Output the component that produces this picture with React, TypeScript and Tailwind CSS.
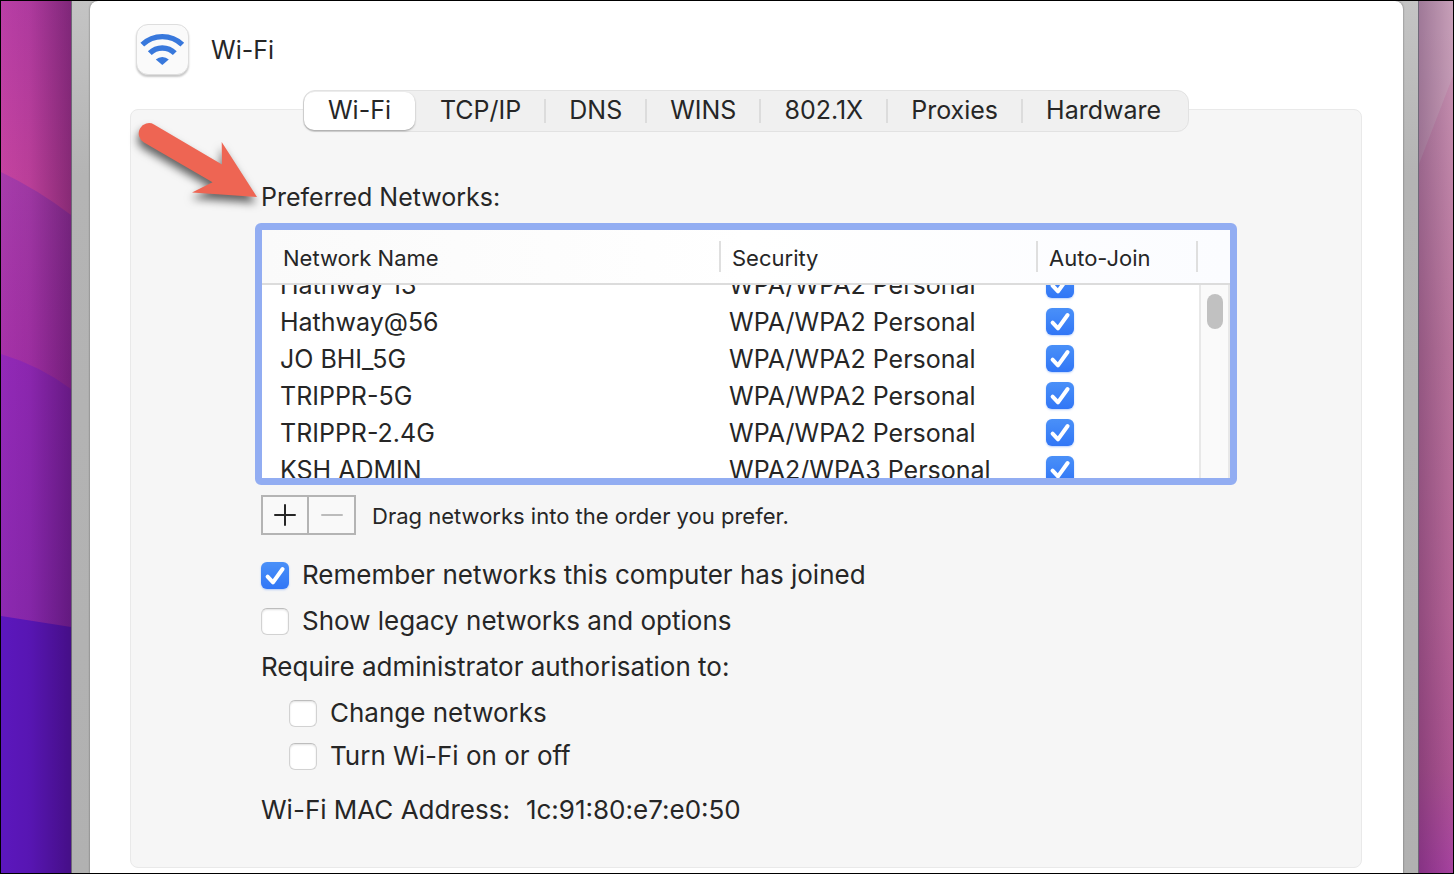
import { useState } from "react";

const tabs = ["Wi-Fi", "TCP/IP", "DNS", "WINS", "802.1X", "Proxies", "Hardware"];

const initialNetworks = [
  { name: "Hathway 13", security: "WPA/WPA2 Personal", autoJoin: true },
  { name: "Hathway@56", security: "WPA/WPA2 Personal", autoJoin: true },
  { name: "JO BHI_5G", security: "WPA/WPA2 Personal", autoJoin: true },
  { name: "TRIPPR-5G", security: "WPA/WPA2 Personal", autoJoin: true },
  { name: "TRIPPR-2.4G", security: "WPA/WPA2 Personal", autoJoin: true },
  { name: "KSH ADMIN", security: "WPA2/WPA3 Personal", autoJoin: true },
];

const Checkbox = ({
  id,
  label,
  defaultChecked = false,
}: {
  id: string;
  label?: string;
  defaultChecked?: boolean;
}) => {
  return (
    <span className="grid shrink-0">
      <input
        id={id}
        type="checkbox"
        aria-label={label}
        defaultChecked={defaultChecked}
        className="peer col-start-1 row-start-1 w-7 h-[27px] appearance-none rounded-md border border-[#d2d2d2] border-t-[#bdbdbd] bg-white shadow-[inset_0_1px_2px_rgba(0,0,0,0.12)] checked:border-0 checked:bg-linear-to-b checked:from-[#4a90f8] checked:to-[#3176f6] checked:shadow-[0_1px_2px_rgba(49,118,246,0.35)]"
      />
      <svg
        viewBox="0 0 28 27"
        className="col-start-1 row-start-1 w-7 h-[27px] pointer-events-none invisible peer-checked:visible"
        fill="none"
        stroke="white"
        strokeWidth="4"
        strokeLinecap="round"
        strokeLinejoin="round"
      >
        <path d="M6.6 14.6 L12 20.3 L21.6 7" />
      </svg>
    </span>
  );
};

const Option = ({
  id,
  text,
  defaultChecked,
}: {
  id: string;
  text: string;
  defaultChecked?: boolean;
}) => (
  <div className="flex items-center gap-[13px] h-8">
    <Checkbox id={id} defaultChecked={defaultChecked} />
    <label htmlFor={id}>{text}</label>
  </div>
);

const WifiIcon = () => (
  <span className="flex w-[53px] h-[51px] rounded-xl border border-[#dedede] bg-[#fafafa] shadow-[0_2px_2px_rgba(0,0,0,0.22)]">
    <svg viewBox="137 25 51 49" className="w-full h-full" fill="none" stroke="#3878dc" strokeWidth="5.4">
      <path d="M142.3 44.6 A29 29 0 0 1 182.3 44.6" />
      <path d="M149.8 53.2 A17.5 17.5 0 0 1 174.8 53.2" />
      <path d="M155.8 59.6 A9.6 9.6 0 0 1 168.8 59.6 L162.3 65 Z" fill="#3878dc" stroke="none" />
    </svg>
  </span>
);

const PointerArrow = () => (
  <svg
    viewBox="0 0 140 110"
    className="absolute left-0 top-0 w-[140px] h-[110px] pointer-events-none drop-shadow-[-1px_6px_4px_rgba(0,0,0,0.6)]"
  >
    <path
      d="M23 14.4 L91 54.4 L90.7 32 L126 87 L61 82.6 L81.5 72.3 L13 32.4 A10 10 0 0 1 23 14.4 Z"
      fill="#ee6553"
    />
  </svg>
);

const WallpaperLeft = () => (
  <svg viewBox="0 0 71 872" preserveAspectRatio="none" className="w-[70px] self-stretch shrink-0">
    <defs>
      <linearGradient id="pink" x1="0" y1="0" x2="0" y2="1">
        <stop offset="0" stopColor="#b93ea6" />
        <stop offset="1" stopColor="#c8449f" />
      </linearGradient>
      <linearGradient id="orchid" x1="0" y1="0" x2="0" y2="1">
        <stop offset="0" stopColor="#a73cab" />
        <stop offset="1" stopColor="#a62fa8" />
      </linearGradient>
      <linearGradient id="violet" x1="0" y1="0" x2="0" y2="1">
        <stop offset="0" stopColor="#9329b8" />
        <stop offset="1" stopColor="#8c29b0" />
      </linearGradient>
      <linearGradient id="shadeLeft" x1="0" y1="0" x2="1" y2="0">
        <stop offset="0" stopColor="#200030" stopOpacity="0" />
        <stop offset="0.4" stopColor="#200030" stopOpacity="0.07" />
        <stop offset="1" stopColor="#200030" stopOpacity="0.38" />
      </linearGradient>
    </defs>
    <path d="M0 0 H71 V220 H0 Z" fill="url(#pink)" />
    <path d="M0 171 Q38 189 71 214 V400 H0 Z" fill="url(#orchid)" />
    <path d="M0 353 Q40 365 71 388 V640 H0 Z" fill="url(#violet)" />
    <path d="M0 615 L71 626 V872 H0 Z" fill="#5c17bd" />
    <path d="M0 0 H71 V872 H0 Z" fill="url(#shadeLeft)" />
  </svg>
);

const WallpaperRight = () => (
  <svg viewBox="0 0 34 872" preserveAspectRatio="none" className="w-[34px] self-stretch shrink-0">
    <defs>
      <linearGradient id="dusk" x1="0" y1="0" x2="0" y2="1">
        <stop offset="0" stopColor="#c795b4" />
        <stop offset="0.4" stopColor="#b9749c" />
        <stop offset="0.7" stopColor="#b56396" />
        <stop offset="0.88" stopColor="#ae5592" />
        <stop offset="1" stopColor="#a6429f" />
      </linearGradient>
      <linearGradient id="shadeRight" x1="0" y1="0" x2="1" y2="0">
        <stop offset="0" stopColor="#200030" stopOpacity="0.24" />
        <stop offset="1" stopColor="#200030" stopOpacity="0" />
      </linearGradient>
    </defs>
    <path d="M0 0 H34 V872 H0 Z" fill="url(#dusk)" />
    <path d="M0 0 H34 V75 L0 163 Z" fill="#c8b4c4" fillOpacity="0.35" />
    <path d="M0 0 H34 V872 H0 Z" fill="url(#shadeRight)" />
  </svg>
);

const NetworksTable = () => (
  <div className="relative rounded-md border-[7px] border-[#92adf2] bg-white">
    <table className="block" aria-labelledby="preferred">
      <thead className="block">
        <tr className="grid grid-cols-[1fr_317px_160px_32px] h-[53px] items-center bg-linear-to-r from-[#fafafa] via-white to-[#fbfcff] text-[22px] text-left">
          <th className="flex items-center h-[31px] pl-[21px] pt-0.5 border-r-2 border-[#dfdfdf] font-normal">Network Name</th>
          <th className="flex items-center h-[31px] pl-[11px] pt-0.5 border-r-2 border-[#dfdfdf] font-normal">Security</th>
          <th className="flex items-center h-[31px] pl-[11px] pt-0.5 border-r-2 border-[#dfdfdf] font-normal">Auto-Join</th>
        </tr>
      </thead>
      <tbody className="block h-[195px] overflow-hidden border-t-2 border-[#dcdcdc]">
        {initialNetworks.map((network) => (
          <tr
            key={network.name}
            className="grid grid-cols-[1fr_317px_160px_32px] items-center h-[37px] first:-mt-[19px]"
          >
            <td className="pl-[18px]">{network.name}</td>
            <td className="pl-2">{network.security}</td>
            <td className="pl-2">
              <Checkbox
                id={network.name}
                label={"Auto-join " + network.name}
                defaultChecked={network.autoJoin}
              />
            </td>
          </tr>
        ))}
      </tbody>
    </table>
    <div className="absolute right-0 top-[55px] bottom-0 w-[31px] border-l-2 border-r-2 border-[#e8e8e8] bg-[#fafafa] pl-1.5 pt-[9px]">
      <div className="w-4 h-[35px] rounded-full bg-[#c1c1c1]" />
    </div>
  </div>
);

const App = () => {
  const [activeTab, setActiveTab] = useState("Wi-Fi");

  return (
    <div className="flex min-h-screen border border-black font-['Inter',sans-serif] text-[25px] leading-8 text-[#262626]">
      <WallpaperLeft />
      <div className="flex flex-1 pl-[18px] pr-[15px] border-x border-[#6f6878] bg-linear-to-b from-[#c4c4c4] via-[#b4b4b4] via-20% to-[#b1b1b1]">
        <main className="flex-1 rounded-t-lg bg-white pl-10 pr-[41px] pt-[23px] pb-[5px] shadow-[0_0_2px_rgba(0,0,0,0.5)]">
          <header className="flex items-center gap-[22px] pl-[6px]">
            <WifiIcon />
            <h1>Wi-Fi</h1>
          </header>

          <section className="relative mt-[34px] rounded-lg border border-[#e9e9e9] bg-[#f6f6f6] px-[124px] pb-[41px]">
            <nav className="flex justify-center -mt-5 -mx-20">
              <div role="tablist" className="flex h-[42px] pr-1 rounded-xl border border-[#e2e2e2] bg-[#f0f0f0]">
                {tabs.map((tab, i) => (
                  <div key={tab} className="flex items-center">
                    {i > 0 && (
                      <span
                        className={
                          activeTab === tab || activeTab === tabs[i - 1]
                            ? "w-0.5 h-6"
                            : "w-0.5 h-6 bg-[#dcdcdc]"
                        }
                      />
                    )}
                    <button
                      role="tab"
                      aria-selected={activeTab === tab}
                      onClick={() => setActiveTab(tab)}
                      className={
                        activeTab === tab
                          ? "h-[38px] px-6 pb-0.5 rounded-[10px] bg-white shadow-[0_1px_2px_rgba(0,0,0,0.35)]"
                          : "h-[38px] px-[23px] pb-0.5"
                      }
                    >
                      {tab}
                    </button>
                  </div>
                ))}
              </div>
            </nav>

            <PointerArrow />

            <h2 id="preferred" className="mt-[49px] mb-[10px] pl-[6px]">
              Preferred Networks:
            </h2>
            <NetworksTable />

            <div className="pl-[6px] text-[26px] leading-8">
              <div className="flex items-center gap-4 mt-[10px]">
                <div className="flex h-10 border-2 border-[#b4b4b4] bg-[#f9f9f9]">
                  <button aria-label="Add network" className="flex items-center justify-center w-[46px] border-r-2 border-[#b4b4b4]">
                    <svg viewBox="0 0 22 22" className="w-[22px] h-[22px]" stroke="#262626" strokeWidth="2" strokeLinecap="round">
                      <path d="M1 11 H21 M11 1 V21" />
                    </svg>
                  </button>
                  <button aria-label="Remove network" disabled className="flex items-center justify-center w-[45px]">
                    <svg viewBox="0 0 22 22" className="w-[22px] h-[22px]" stroke="#bcbcbc" strokeWidth="2" strokeLinecap="round">
                      <path d="M1 11 H21" />
                    </svg>
                  </button>
                </div>
                <p className="pt-0.5 text-[22px]">Drag networks into the order you prefer.</p>
              </div>

              <div className="flex flex-col gap-[14px] mt-6">
                <Option id="remember" text="Remember networks this computer has joined" defaultChecked />
                <Option id="legacy" text="Show legacy networks and options" />
                <p>Require administrator authorisation to:</p>
                <div className="flex flex-col gap-[11px] pl-7">
                  <Option id="change" text="Change networks" />
                  <Option id="turn" text="Turn Wi-Fi on or off" />
                </div>
              </div>

              <p className="flex gap-4 mt-[22px]">
                <span>Wi-Fi MAC Address:</span>
                <span>1c:91:80:e7:e0:50</span>
              </p>
            </div>
          </section>
        </main>
      </div>
      <WallpaperRight />
    </div>
  );
};

export default App;
